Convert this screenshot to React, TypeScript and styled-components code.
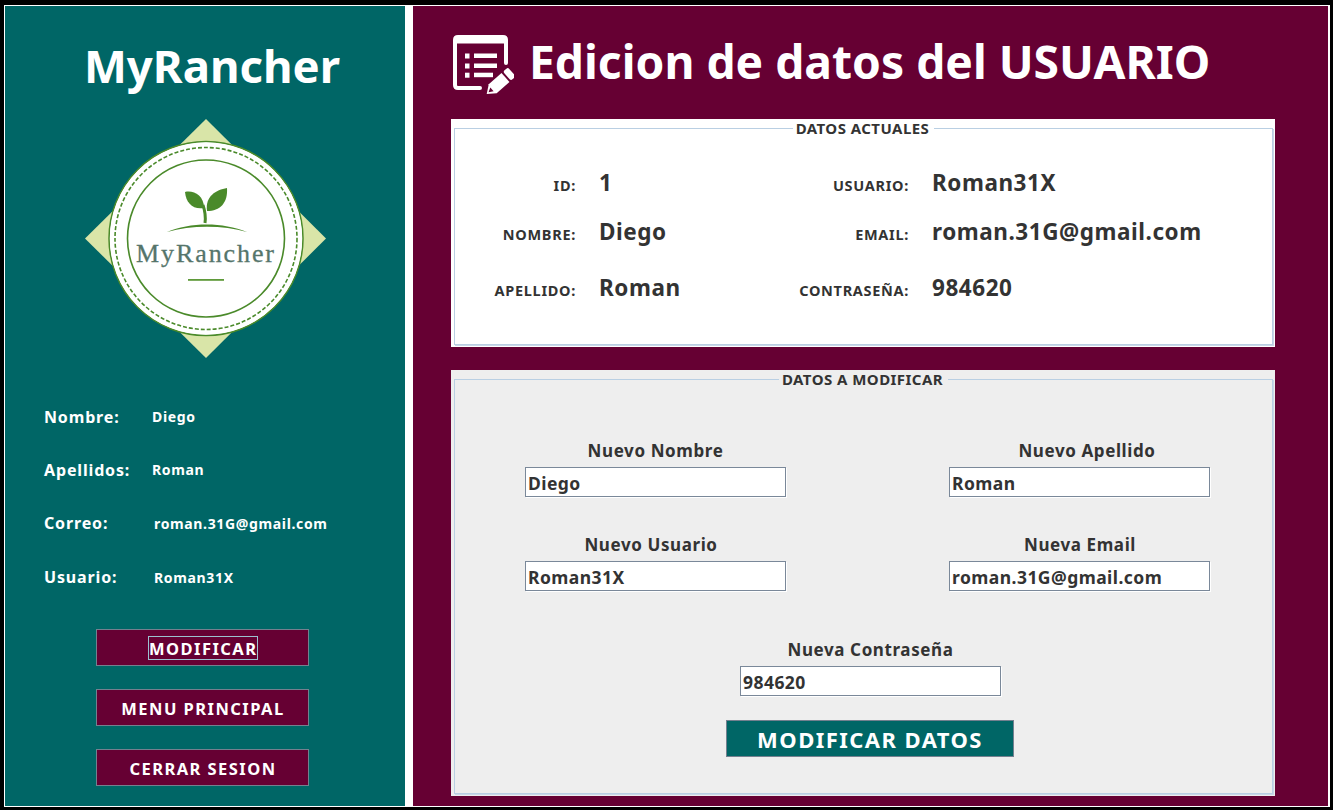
import React from 'react';
import styled, { createGlobalStyle } from 'styled-components';

const maroon = '#660033';
const teal = '#006666';
const ink = '#333333';
const fontStack = '"Noto Sans", "DejaVu Sans", sans-serif';

const GlobalStyle = createGlobalStyle`
  html, body {
    margin: 0;
    padding: 0;
    background: #000;
  }
  body {
    width: 1333px;
    height: 810px;
    overflow: hidden;
    font-family: ${fontStack};
    font-weight: 700;
    color: ${ink};
  }
`;

const Frame = styled.div`
  box-sizing: border-box;
  display: flex;
  gap: 8px;
  width: 1326px;
  height: 802px;
  margin: 5px 3px 3px 4px;
  background: #fff;
  border-style: solid;
  border-color: #fff;
  border-width: 1px 2px 1px 1px;
`;

const Sidebar = styled.aside`
  display: flex;
  flex-direction: column;
  width: 400px;
  flex: none;
  background: ${teal};
  color: #fff;
`;

const Brand = styled.h1`
  margin: 0;
  height: 113px;
  padding-left: 14px;
  font-size: 45.5px;
  line-height: 119px;
  text-align: center;
  font-weight: 700;
`;

const LogoWrap = styled.div`
  display: flex;
  justify-content: center;
  height: 240px;
  padding-left: 1px;
`;

const InfoList = styled.div`
  display: flex;
  flex-direction: column;
  margin-top: 31px;
  padding-left: 39px;
`;

const InfoRow = styled.div<{ $height: number; $valueGap: number }>`
  display: grid;
  grid-template-columns: ${(p) => p.$valueGap}px 1fr;
  align-items: center;
  height: ${(p) => p.$height}px;
`;

const InfoLabel = styled.span`
  font-size: 16px;
  letter-spacing: 0.85px;
`;

const InfoValue = styled.span`
  font-size: 14px;
  letter-spacing: 0.65px;
`;

const SideActions = styled.div`
  display: flex;
  flex-direction: column;
  align-items: center;
  gap: 23px;
  margin-top: 25px;
  padding-right: 6px;
`;

const SideButton = styled.button`
  box-sizing: border-box;
  display: flex;
  align-items: center;
  justify-content: center;
  width: 213px;
  height: 37px;
  padding: 2px 0 0 2px;
  background: ${maroon};
  border: 1px solid #74808f;
  color: #fff;
  font-family: ${fontStack};
  font-size: 16.5px;
  font-weight: 700;
  letter-spacing: 1.45px;
`;

const FocusMark = styled.span`
  box-sizing: border-box;
  width: 110px;
  height: 24px;
  margin-top: -2px;
  line-height: 24px;
  border: 1px solid #9cc0d0;
  white-space: nowrap;
`;

const Main = styled.main`
  flex: 1;
  display: flex;
  flex-direction: column;
  padding: 0 53px 10px 38px;
  background: ${maroon};
`;

const PageHeader = styled.header`
  display: flex;
  align-items: center;
  gap: 15px;
  height: 113px;
  padding-left: 1px;
  color: #fff;
  svg {
    margin-top: 5px;
    flex: none;
  }
`;

const PageTitle = styled.h2`
  margin: 0 0 2px;
  font-size: 46.2px;
  font-weight: 700;
  white-space: nowrap;
`;

const Panel = styled.section<{ $bg: string; $height: number; $top?: number }>`
  box-sizing: border-box;
  height: ${(p) => p.$height}px;
  margin-top: ${(p) => p.$top ?? 0}px;
  background: ${(p) => p.$bg};
  display: flex;
  flex-direction: column;
`;

const PanelBody = styled.fieldset`
  box-sizing: border-box;
  flex: 1;
  min-width: 0;
  margin: 0 2px 2px 3px;
  padding: 0;
  border: 1px solid #b9cfe3;
  box-shadow: 1px 1px 0 #c9d7e8;
`;

const PanelLegend = styled.legend`
  margin: 0 auto;
  padding: 0 5px 0 3px;
  font-size: 15px;
  line-height: 18px;
  font-weight: 700;
  letter-spacing: 0.45px;
`;

const CurrentGrid = styled.div`
  display: grid;
  grid-template-columns: 121px 173px 160px 1fr;
  grid-template-rows: 49px 56px 56px;
  align-items: baseline;
  padding-top: 30px;
`;

const CurrentLabel = styled.span`
  justify-self: end;
  font-size: 14.5px;
  letter-spacing: 0.7px;
`;

const CurrentValue = styled.span`
  padding-left: 23px;
  font-size: 22.5px;
  letter-spacing: 0.55px;
`;

const FormGrid = styled.div`
  display: grid;
  grid-template-columns: 261px 261px;
  justify-content: space-between;
  row-gap: 37px;
  padding: 52px 62px 0 70px;
`;

const Field = styled.label<{ $offset?: number }>`
  display: flex;
  flex-direction: column;
  width: 261px;
  ${(p) => p.$offset && `margin: 48px 0 0 ${p.$offset}px;`}
`;

const FieldLabel = styled.span<{ $shift?: number }>`
  height: 27px;
  ${(p) => ((p.$shift ?? 0) >= 0 ? `padding-left: ${p.$shift ?? 0}px;` : `padding-right: ${-(p.$shift ?? 0)}px;`)}
  font-size: 17px;
  line-height: 22px;
  letter-spacing: 0.6px;
  text-align: center;
`;

const FieldInput = styled.input`
  box-sizing: border-box;
  width: 261px;
  height: 30px;
  padding: 2px 1px 0 2px;
  background: #fff;
  border: 1px solid #7a8899;
  box-shadow: 1px 1px 0 #fff;
  border-radius: 0;
  outline: none;
  color: ${ink};
  font-family: ${fontStack};
  font-size: 17.5px;
  font-weight: 700;
  letter-spacing: 0.45px;
`;

const SubmitButton = styled.button`
  box-sizing: border-box;
  display: block;
  width: 288px;
  height: 37px;
  margin: 24px 0 0 271px;
  padding: 0;
  background: ${teal};
  border: 1px solid #74808f;
  color: #fff;
  font-family: ${fontStack};
  font-size: 22px;
  font-weight: 700;
  letter-spacing: 1.45px;
`;

function RancherLogo() {
  return (
    <svg width="242" height="240" viewBox="0 0 242 240" role="img" aria-label="MyRancher">
      <polygon points="121,0 241,119.5 121,239 0,119.5" fill="#d9e5a8" />
      <circle cx="121" cy="119.5" r="97" fill="#fff" stroke="#4a8a2a" strokeWidth="1.5" />
      <circle cx="121" cy="119.5" r="95" fill="none" stroke="#fff" strokeWidth="2" />
      <circle cx="121" cy="119.5" r="91" fill="none" stroke="#4a8a2a" strokeWidth="1.6" strokeDasharray="4 2" />
      <circle cx="121" cy="119.5" r="78.5" fill="none" stroke="#4a8a2a" strokeWidth="1.6" />
      <path d="M120 104 C121 97 120 92 118 86" fill="none" stroke="#4a8a2a" strokeWidth="3" />
      <path d="M100 73 C108 71 119 76 119 89 C108 91 101 84 100 73 Z" fill="#4a8a2a" />
      <path d="M142 69 C131 71 120 77 122 92 C135 92 143 84 142 69 Z" fill="#4a8a2a" />
      <path d="M82 113 C105 103 138 103 162 113 C138 106 106 106 82 113 Z" fill="#4a8a2a" />
      <text x="121" y="143" textAnchor="middle" fontFamily='"Liberation Serif", serif' fontSize="26" fontWeight="400" letterSpacing="1.9" fill="#55756b" stroke="#55756b" strokeWidth="0.3">
        MyRancher
      </text>
      <rect x="103" y="160" width="36" height="1.8" fill="#5f9a3a" />
    </svg>
  );
}

function EditListIcon() {
  return (
    <svg width="62" height="62" viewBox="0 0 62 62" aria-hidden="true">
      <path d="M28 54 H6 Q3 54 3 51 V6 Q3 3 6 3 H51 Q54 3 54 6 V29" fill="none" stroke="#fff" strokeWidth="4" strokeLinecap="round" />
      <rect x="2" y="2" width="53" height="7.5" rx="3" fill="#fff" />
      <rect x="13" y="19.5" width="4.5" height="5" fill="#fff" />
      <rect x="13" y="29.5" width="4.5" height="5" fill="#fff" />
      <rect x="13" y="38.7" width="4.5" height="5" fill="#fff" />
      <rect x="22" y="19.5" width="23" height="4.5" fill="#fff" />
      <rect x="22" y="29.5" width="23" height="4.5" fill="#fff" />
      <rect x="22" y="38.7" width="19" height="4.5" fill="#fff" />
      <g transform="translate(34.7 60) rotate(-41.3)">
        <path d="M0 0 L8 -6 H25 V6 H8 Z" fill="#fff" stroke={maroon} strokeWidth="1.5" paintOrder="stroke" />
        <path d="M2.5 0 L7 -2.5 V2.5 Z" fill={maroon} />
        <rect x="27" y="-6" width="6.5" height="12" rx="2" fill="#fff" />
      </g>
    </svg>
  );
}

const sideInfo = [
  { label: 'Nombre:', value: 'Diego', gap: 108, height: 53 },
  { label: 'Apellidos:', value: 'Roman', gap: 108, height: 53 },
  { label: 'Correo:', value: 'roman.31G@gmail.com', gap: 110, height: 54 },
  { label: 'Usuario:', value: 'Roman31X', gap: 110, height: 54 },
];

const currentData = [
  ['ID:', '1', 'USUARIO:', 'Roman31X'],
  ['NOMBRE:', 'Diego', 'EMAIL:', 'roman.31G@gmail.com'],
  ['APELLIDO:', 'Roman', 'CONTRASEÑA:', '984620'],
];

const formFields = [
  { label: 'Nuevo Nombre', value: 'Diego', shift: 0 },
  { label: 'Nuevo Apellido', value: 'Roman', shift: 15 },
  { label: 'Nuevo Usuario', value: 'Roman31X', shift: -9 },
  { label: 'Nueva Email', value: 'roman.31G@gmail.com', shift: 1 },
];

export default function App() {
  return (
    <>
      <GlobalStyle />
      <Frame>
        <Sidebar>
          <Brand>MyRancher</Brand>
          <LogoWrap>
            <RancherLogo />
          </LogoWrap>
          <InfoList>
            {sideInfo.map((row) => (
              <InfoRow key={row.label} $height={row.height} $valueGap={row.gap}>
                <InfoLabel>{row.label}</InfoLabel>
                <InfoValue>{row.value}</InfoValue>
              </InfoRow>
            ))}
          </InfoList>
          <SideActions>
            <SideButton>
              <FocusMark>MODIFICAR</FocusMark>
            </SideButton>
            <SideButton>MENU PRINCIPAL</SideButton>
            <SideButton>CERRAR SESION</SideButton>
          </SideActions>
        </Sidebar>
        <Main>
          <PageHeader>
            <EditListIcon />
            <PageTitle>Edicion de datos del USUARIO</PageTitle>
          </PageHeader>
          <Panel $bg="#fff" $height={228}>
            <PanelBody>
              <PanelLegend>DATOS ACTUALES</PanelLegend>
              <CurrentGrid>
                {currentData.map((row) => (
                  <React.Fragment key={row[0]}>
                    <CurrentLabel>{row[0]}</CurrentLabel>
                    <CurrentValue>{row[1]}</CurrentValue>
                    <CurrentLabel>{row[2]}</CurrentLabel>
                    <CurrentValue>{row[3]}</CurrentValue>
                  </React.Fragment>
                ))}
              </CurrentGrid>
            </PanelBody>
          </Panel>
          <Panel $bg="#eeeeee" $height={426} $top={23}>
            <PanelBody>
              <PanelLegend>DATOS A MODIFICAR</PanelLegend>
              <FormGrid>
                {formFields.map((field) => (
                  <Field key={field.label}>
                    <FieldLabel $shift={field.shift}>{field.label}</FieldLabel>
                    <FieldInput readOnly value={field.value} />
                  </Field>
                ))}
              </FormGrid>
              <Field $offset={285}>
                <FieldLabel>Nueva Contraseña</FieldLabel>
                <FieldInput readOnly value="984620" />
              </Field>
              <SubmitButton>MODIFICAR DATOS</SubmitButton>
            </PanelBody>
          </Panel>
        </Main>
      </Frame>
    </>
  );
}
